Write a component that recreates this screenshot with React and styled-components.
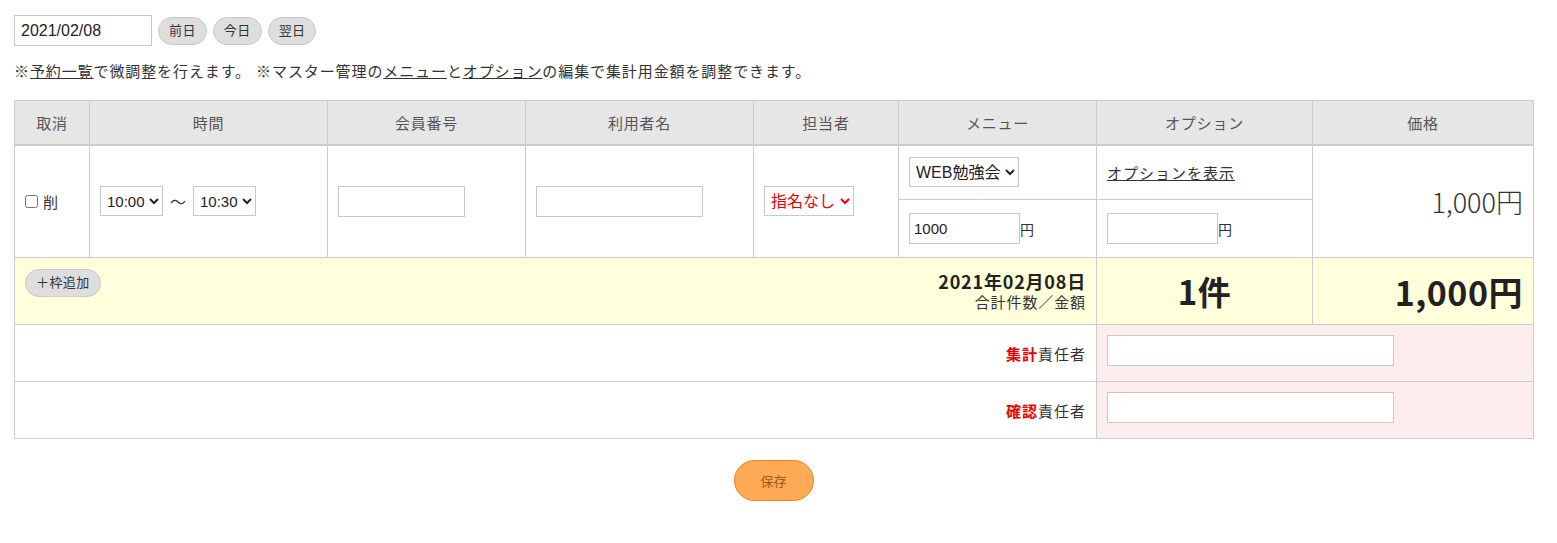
import React from "react";
import styled, { createGlobalStyle } from "styled-components";

const Global = createGlobalStyle`
  html, body { margin: 0; padding: 0; background: #fff; }
  body {
    font-family: "Liberation Sans", "Noto Sans CJK JP", sans-serif;
    color: #333;
    font-size: 14px;
  }
  * { box-sizing: border-box; }
`;

const Page = styled.div`
  padding: 15px 14px 40px 14px;
  width: 1547px;
`;

const Toolbar = styled.div`
  display: flex;
  align-items: center;
  gap: 6px;
  height: 31px;
`;

const DateInput = styled.input`
  width: 138px;
  height: 31px;
  border: 1px solid #c8c8c8;
  padding: 0 6px;
  font-family: "Liberation Sans", "Noto Sans CJK JP", sans-serif;
  font-size: 16px;
  color: #222;
`;

const PillButton = styled.button`
  height: 28px;
  padding: 0 10px;
  border: 1px solid #c8c8c8;
  border-radius: 14px;
  background: #dedede;
  color: #333;
  font-family: "Liberation Sans", "Noto Sans CJK JP", sans-serif;
  font-size: 13px;
  letter-spacing: 0.4px;
  line-height: 26px;
  cursor: pointer;
`;

const Note = styled.p`
  margin: 16px 0 0 0;
  line-height: 20px;
  font-size: 15px;
  letter-spacing: 0.9px;
  color: #333;
`;

const TextLink = styled.a`
  color: #333;
  text-decoration: underline;
`;

const Table = styled.table`
  margin-top: 18px;
  width: 1519px;
  table-layout: fixed;
  border-collapse: collapse;
`;

const Th = styled.th`
  height: 44px;
  background: #e6e6e6;
  border: 1px solid #cccccc;
  border-bottom: 2px solid #cccccc;
  color: #555;
  font-weight: normal;
  font-size: 15px;
  letter-spacing: 0.8px;
  text-align: center;
`;

const Td = styled.td`
  border: 1px solid #cccccc;
  padding: ${(p) => (p.$top ? "10px 10px 0 10px" : "0 10px")};
  vertical-align: ${(p) => (p.$top ? "top" : "middle")};
  text-align: ${(p) => p.$align || "left"};
  background: ${(p) =>
    p.$tone === "yellow" ? "#ffffdc" : p.$tone === "pink" ? "#fdeded" : "#fff"};
  height: ${(p) => p.$h || "auto"};
`;

const CheckLabel = styled.label`
  display: inline-flex;
  align-items: center;
  gap: 5px;
  font-size: 15px;
  color: #333;
  input { margin: 0; width: 13px; height: 13px; }
`;

const Inline = styled.div`
  display: flex;
  align-items: center;
  gap: 7px;
`;

const Select = styled.select`
  height: 30px;
  border: 1px solid #c8c8c8;
  border-radius: 0;
  background: #fff;
  padding: 0 1px 0 2px;
  font-family: "Liberation Sans", "Noto Sans CJK JP", sans-serif;
  font-size: ${(p) => p.$size || "15px"};
  color: ${(p) => (p.$red ? "#ee0000" : "#222")};
`;

const Tilde = styled.span`
  font-size: 16px;
  color: #333;
`;

const TextInput = styled.input`
  width: ${(p) => p.$w || "127px"};
  height: 31px;
  border: 1px solid #c8c8c8;
  padding: 0 4px;
  font-family: "Liberation Sans", "Noto Sans CJK JP", sans-serif;
  font-size: 15px;
  color: #222;
  background: #fff;
`;

const YenInput = styled.div`
  display: flex;
  align-items: center;
  font-size: 14px;
  color: #333;
`;

const OptionLink = styled(TextLink)`
  font-size: 15px;
  letter-spacing: 1px;
`;

const Price = styled.span`
  font-family: "Noto Sans CJK JP", sans-serif;
  font-size: 27px;
  font-weight: 300;
  color: #333;
`;

const SummaryWrap = styled.div`
  display: flex;
  justify-content: space-between;
  align-items: flex-start;
  padding: 10px 0;
`;

const SummaryText = styled.div`
  text-align: right;
`;

const SummaryDate = styled.div`
  font-family: "Noto Sans CJK JP", sans-serif;
  font-size: 18px;
  font-weight: 700;
  letter-spacing: 0.8px;
  line-height: 24px;
  color: #222;
`;

const SummarySub = styled.div`
  font-size: 15px;
  letter-spacing: 0.9px;
  line-height: 20px;
  color: #333;
`;

const BigNumber = styled.span`
  font-family: "Noto Sans CJK JP", sans-serif;
  font-size: ${(p) => p.$size || "31px"};
  font-weight: 700;
  letter-spacing: 0.5px;
  color: #222;
`;

const Label = styled.span`
  font-size: 15px;
  letter-spacing: 1px;
  color: #333;
`;

const RedMark = styled.b`
  color: #ee0000;
`;

const Footer = styled.div`
  width: 1519px;
  display: flex;
  justify-content: center;
  margin-top: 21px;
`;

const SaveButton = styled.button`
  width: 80px;
  height: 41px;
  border-radius: 21px;
  border: 1px solid #ec8419;
  background: #ffaa55;
  color: #9a5a1e;
  font-family: "Liberation Sans", "Noto Sans CJK JP", sans-serif;
  font-size: 13px;
  cursor: pointer;
`;

const cols = [75, 238, 198, 228, 145, 198, 216, 221];

export default function App() {
  return (
    <>
      <Global />
      <Page>
        <Toolbar>
          <DateInput defaultValue="2021/02/08" />
          <PillButton>前日</PillButton>
          <PillButton>今日</PillButton>
          <PillButton>翌日</PillButton>
        </Toolbar>
        <Note>
          ※<TextLink href="#">予約一覧</TextLink>で微調整を行えます。 ※マスター管理の
          <TextLink href="#">メニュー</TextLink>と<TextLink href="#">オプション</TextLink>
          の編集で集計用金額を調整できます。
        </Note>
        <Table>
          <colgroup>
            {cols.map((w, i) => (
              <col key={i} style={{ width: w }} />
            ))}
          </colgroup>
          <thead>
            <tr>
              <Th>取消</Th>
              <Th>時間</Th>
              <Th>会員番号</Th>
              <Th>利用者名</Th>
              <Th>担当者</Th>
              <Th>メニュー</Th>
              <Th>オプション</Th>
              <Th>価格</Th>
            </tr>
          </thead>
          <tbody>
            <tr>
              <Td rowSpan={2}>
                <CheckLabel>
                  <input type="checkbox" />削
                </CheckLabel>
              </Td>
              <Td rowSpan={2}>
                <Inline>
                  <Select defaultValue="10:00">
                    <option>10:00</option>
                    <option>10:30</option>
                  </Select>
                  <Tilde>〜</Tilde>
                  <Select defaultValue="10:30">
                    <option>10:00</option>
                    <option>10:30</option>
                  </Select>
                </Inline>
              </Td>
              <Td rowSpan={2}>
                <TextInput $w="127px" />
              </Td>
              <Td rowSpan={2}>
                <TextInput $w="167px" />
              </Td>
              <Td rowSpan={2}>
                <Select $red $size="16px" defaultValue="指名なし">
                  <option>指名なし</option>
                </Select>
              </Td>
              <Td $h="55px">
                <Select $size="16px" defaultValue="WEB勉強会">
                  <option>WEB勉強会</option>
                </Select>
              </Td>
              <Td $h="55px">
                <OptionLink href="#">オプションを表示</OptionLink>
              </Td>
              <Td rowSpan={2} $align="right">
                <Price>1,000円</Price>
              </Td>
            </tr>
            <tr>
              <Td $h="58px">
                <YenInput>
                  <TextInput $w="111px" defaultValue="1000" />円
                </YenInput>
              </Td>
              <Td $h="58px">
                <YenInput>
                  <TextInput $w="111px" />円
                </YenInput>
              </Td>
            </tr>
            <tr>
              <Td colSpan={6} $tone="yellow" $h="67px">
                <SummaryWrap>
                  <PillButton>＋枠追加</PillButton>
                  <SummaryText>
                    <SummaryDate>2021年02月08日</SummaryDate>
                    <SummarySub>合計件数／金額</SummarySub>
                  </SummaryText>
                </SummaryWrap>
              </Td>
              <Td $tone="yellow" $align="center">
                <BigNumber $size="33px">1件</BigNumber>
              </Td>
              <Td $tone="yellow" $align="right">
                <BigNumber $size="34px">1,000円</BigNumber>
              </Td>
            </tr>
            <tr>
              <Td colSpan={6} $align="right" $h="57px">
                <Label>
                  <RedMark>集計</RedMark>責任者
                </Label>
              </Td>
              <Td colSpan={2} $tone="pink" $top>
                <TextInput $w="287px" />
              </Td>
            </tr>
            <tr>
              <Td colSpan={6} $align="right" $h="57px">
                <Label>
                  <RedMark>確認</RedMark>責任者
                </Label>
              </Td>
              <Td colSpan={2} $tone="pink" $top>
                <TextInput $w="287px" />
              </Td>
            </tr>
          </tbody>
        </Table>
        <Footer>
          <SaveButton>保存</SaveButton>
        </Footer>
      </Page>
    </>
  );
}
